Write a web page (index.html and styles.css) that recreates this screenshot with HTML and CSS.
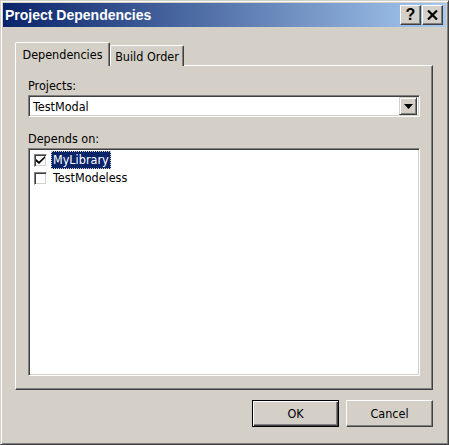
FILE: index.html
```html
<!DOCTYPE html>
<html lang="en">

<head>
  <meta charset="UTF-8">
  <title>Project Dependencies</title>
  <link rel="stylesheet" href="styles.css">
</head>

<body>
  <div class="window">
    <div class="titlebar">
      <span class="title">Project Dependencies</span>
      <div class="caption-buttons">
        <button class="cap-btn help">?</button>
        <button class="cap-btn close">
          <svg width="11" height="10" viewBox="0 0 11 10">
            <path d="M1 0.5 L10 9.5 M10 0.5 L1 9.5" stroke="#000" stroke-width="2.2" />
          </svg>
        </button>
      </div>
    </div>

    <div class="content">
      <div class="tabs">
        <div class="tab active">Dependencies</div>
        <div class="tab">Build Order</div>
      </div>

      <div class="panel">
        <label class="field-label">Projects:</label>
        <div class="combo">
          <span class="combo-text">TestModal</span>
          <div class="combo-btn">
            <svg width="9" height="5" viewBox="0 0 9 5">
              <path d="M0 0 H9 L4.5 5 Z" fill="#000" />
            </svg>
          </div>
        </div>

        <label class="field-label">Depends on:</label>
        <div class="listbox">
          <div class="item">
            <span class="check checked">
              <svg width="9" height="8" viewBox="0 0 9 8">
                <path d="M0 3 L0 5.5 L3 8 L9 2 L9 0 L3 5.5 Z" fill="#000" />
              </svg>
            </span>
            <span class="item-text selected">MyLibrary</span>
          </div>
          <div class="item">
            <span class="check"></span>
            <span class="item-text">TestModeless</span>
          </div>
        </div>
      </div>

      <div class="actions">
        <button class="btn default">OK</button>
        <button class="btn">Cancel</button>
      </div>
    </div>
  </div>
</body>

</html>
```

FILE: styles.css
```css
* {
  margin: 0;
  padding: 0;
  box-sizing: border-box;
}

body {
  font-family: 'DejaVu Sans Condensed', 'DejaVu Sans', sans-serif;
  font-stretch: condensed;
  font-size: 12.5px;
  background: #d4d0c8;
}

.window {
  width: 449px;
  height: 445px;
  background: #d4d0c8;
  border: 1px solid;
  border-color: #d4d0c8 #404040 #404040 #d4d0c8;
  box-shadow: inset 1px 1px #fff, inset -1px -1px #808080;
  padding: 2px;
  display: flex;
  flex-direction: column;
}

.titlebar {
  height: 24px;
  background: linear-gradient(to right, #0a246a, #a6caf0);
  display: flex;
  align-items: center;
  justify-content: space-between;
  padding: 0 3px 0 2px;
}

.title {
  color: #fff;
  font-family: 'Liberation Sans', Arial, sans-serif;
  font-stretch: normal;
  font-weight: bold;
  font-size: 14px;
}

.caption-buttons {
  display: flex;
  gap: 1px;
}

.cap-btn {
  width: 21px;
  height: 20px;
  background: #d4d0c8;
  border: 1px solid;
  border-color: #fff #404040 #404040 #fff;
  box-shadow: inset -1px -1px #808080;
  font-family: 'Liberation Sans', Arial, sans-serif;
  font-weight: bold;
  font-size: 16px;
  display: flex;
  align-items: center;
  justify-content: center;
}

.content {
  flex: 1;
  padding: 15px 13px 0 12px;
  display: flex;
  flex-direction: column;
}

.tabs {
  display: flex;
  align-items: flex-end;
  height: 24px;
  position: relative;
  z-index: 1;
}

.tab {
  height: 21px;
  width: 74px;
  padding-top: 3px;
  text-align: center;
  border: 1px solid;
  border-bottom: none;
  border-color: #fff #404040 transparent #fff;
  box-shadow: inset -1px 0 #808080;
  border-radius: 2px 2px 0 0;
  background: #d4d0c8;
}

.tab.active {
  height: 24px;
  width: 95px;
  padding-top: 4px;
}

.panel {
  height: 325px;
  margin-top: -1px;
  border: 1px solid;
  border-color: #fff #404040 #404040 #fff;
  box-shadow: inset -1px -1px #808080;
  padding: 10px 12px 0 12px;
  display: flex;
  flex-direction: column;
}

.field-label {
  display: block;
  height: 19px;
  line-height: 19px;
}

.combo {
  height: 22px;
  margin-bottom: 12px;
  background: #fff;
  border: 1px solid;
  border-color: #808080 #fff #fff #808080;
  box-shadow: inset 1px 1px #404040, inset -1px -1px #d4d0c8;
  display: flex;
  align-items: center;
  padding: 2px 2px 2px 4px;
}

.combo-text {
  flex: 1;
}

.combo-btn {
  width: 18px;
  height: 18px;
  background: #d4d0c8;
  border: 1px solid;
  border-color: #d4d0c8 #404040 #404040 #d4d0c8;
  box-shadow: inset 1px 1px #fff, inset -1px -1px #808080;
  display: flex;
  align-items: center;
  justify-content: center;
}

.listbox {
  height: 228px;
  background: #fff;
  border: 1px solid;
  border-color: #808080 #fff #fff #808080;
  box-shadow: inset 1px 1px #404040, inset -1px -1px #d4d0c8;
  padding: 2px 0 0 5px;
}

.item {
  height: 18px;
  display: flex;
  align-items: center;
}

.check {
  width: 13px;
  height: 13px;
  border: 1px solid;
  border-color: #808080 #fff #fff #808080;
  box-shadow: inset 1px 1px #404040, inset -1px -1px #d4d0c8;
  background: #fff;
  display: flex;
  align-items: center;
  justify-content: center;
  margin-right: 4px;
}

.item-text {
  padding: 1px 2px;
  line-height: 16px;
}

.item-text.selected {
  background: #0a246a;
  color: #fff;
  outline: 1px dotted #d4d0c8;
  outline-offset: -1px;
}

.actions {
  display: flex;
  justify-content: flex-end;
  gap: 7px;
  padding-top: 10px;
}

.btn {
  width: 87px;
  height: 27px;
  background: #d4d0c8;
  font-family: 'DejaVu Sans Condensed', 'DejaVu Sans', sans-serif;
  font-stretch: condensed;
  font-size: 12.5px;
  border: 1px solid;
  border-color: #fff #404040 #404040 #fff;
  box-shadow: inset -1px -1px #808080;
}

.btn.default {
  border: 1px solid #000;
  box-shadow: inset 1px 1px #fff, inset -1px -1px #404040, inset -2px -2px #808080;
}
```
